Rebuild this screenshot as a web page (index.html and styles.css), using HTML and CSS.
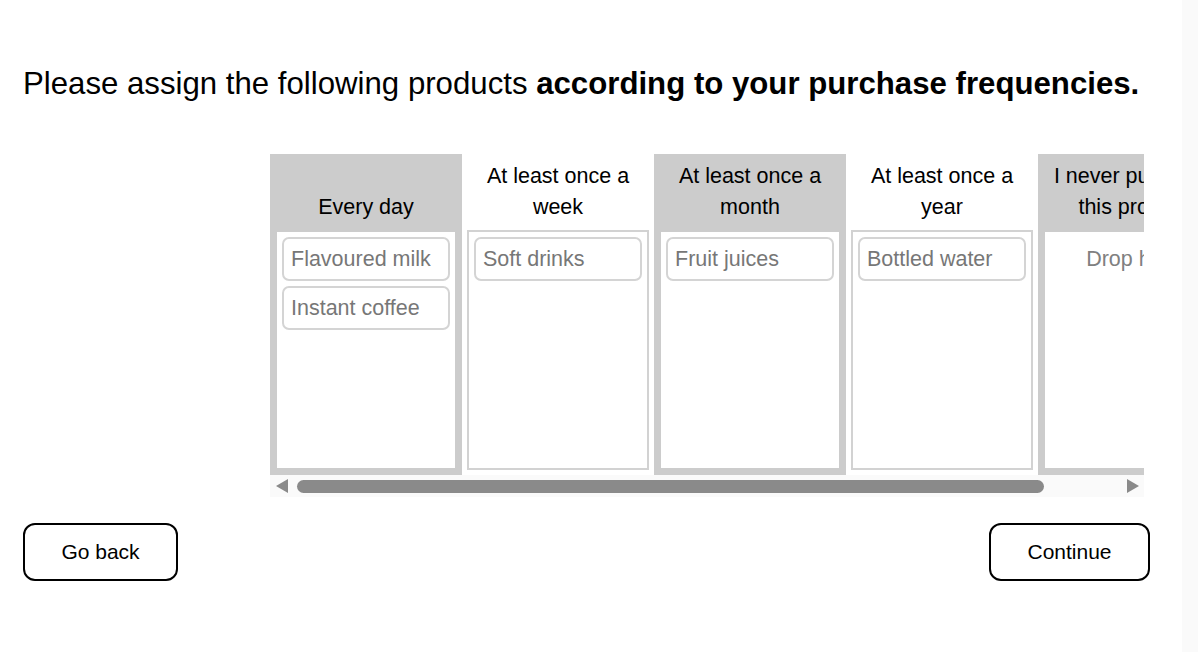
FILE: index.html
```html
<!DOCTYPE html>
<html lang="en">
<head>
    <meta charset="UTF-8">
    <meta name="viewport" content="width=device-width, initial-scale=1.0">
    <title>Purchase frequencies</title>
    <link rel="stylesheet" href="styles.css">
</head>
<body>
    <div class="page">
        <main class="survey">
            <h1 class="question">Please assign the following products <strong>according to your purchase frequencies.</strong></h1>

            <!-- Ranking board -->
            <div class="board">
                <div class="board-scroll">
                    <div class="columns">
                        <div class="column shaded">
                            <div class="column-head">Every day</div>
                            <div class="drop-zone">
                                <div class="item">Flavoured milk</div>
                                <div class="item">Instant coffee</div>
                            </div>
                        </div>
                        <div class="column">
                            <div class="column-head">At least once a week</div>
                            <div class="drop-zone">
                                <div class="item">Soft drinks</div>
                            </div>
                        </div>
                        <div class="column shaded">
                            <div class="column-head">At least once a month</div>
                            <div class="drop-zone">
                                <div class="item">Fruit juices</div>
                            </div>
                        </div>
                        <div class="column">
                            <div class="column-head">At least once a year</div>
                            <div class="drop-zone">
                                <div class="item">Bottled water</div>
                            </div>
                        </div>
                        <div class="column shaded">
                            <div class="column-head">I never purchase this product</div>
                            <div class="drop-zone">
                                <div class="placeholder">Drop here</div>
                            </div>
                        </div>
                    </div>
                </div>
                <div class="scrollbar">
                    <span class="arrow left"></span>
                    <div class="track"><div class="thumb"></div></div>
                    <span class="arrow right"></span>
                </div>
            </div>

            <div class="nav-buttons">
                <button class="btn back">Go back</button>
                <button class="btn next">Continue</button>
            </div>
        </main>
        <div class="page-scroll"></div>
    </div>
</body>
</html>
```

FILE: styles.css
```css
* {
    margin: 0;
    padding: 0;
    box-sizing: border-box;
}

body {
    font-family: 'Liberation Sans', Arial, sans-serif;
    background: #fff;
    color: #000;
}

.page {
    display: flex;
    min-height: 652px;
}

.survey {
    width: 1182px;
    padding: 66px 32px 0 23px;
}

.page-scroll {
    flex: 1;
    background: #fafafa;
}

.question {
    font-size: 31.2px;
    font-weight: normal;
    line-height: 36px;
    margin-bottom: 52px;
    white-space: nowrap;
}

.question strong {
    font-weight: bold;
}

/* Board */
.board {
    width: 874px;
    margin-left: 247px;
}

.board-scroll {
    overflow: hidden;
}

.columns {
    display: flex;
    width: max-content;
}

.column {
    width: 192px;
    background: #fff;
    padding-bottom: 5px;
}

.column.shaded {
    background: #cccccc;
}

.column-head {
    height: 76px;
    padding: 6px 2px 7px;
    display: flex;
    align-items: flex-end;
    justify-content: center;
    text-align: center;
    font-size: 21.5px;
    line-height: 31px;
}

.drop-zone {
    margin: 0 5px;
    height: 240px;
    border: 2px solid #d2d2d2;
    background: #fff;
    padding: 5px 5px;
    display: flex;
    flex-direction: column;
    gap: 5px;
}

.shaded .drop-zone {
    border-color: #cccccc;
}

.item {
    height: 44px;
    border: 2px solid #d4d4d4;
    border-radius: 7px;
    padding: 0 7px;
    font-size: 21.5px;
    line-height: 40px;
    color: #777;
    white-space: nowrap;
}

.placeholder {
    text-align: center;
    font-size: 21.5px;
    line-height: 44px;
    color: #808080;
    white-space: nowrap;
}

/* Fake horizontal scrollbar */
.scrollbar {
    height: 22px;
    background: #fafafa;
    display: flex;
    align-items: center;
    padding: 0 5px 0 6px;
    gap: 9px;
}

.track {
    flex: 1;
}

.thumb {
    width: 747px;
    height: 13px;
    border-radius: 7px;
    background: #8a8a8a;
}

.arrow {
    width: 0;
    height: 0;
    border-top: 7px solid transparent;
    border-bottom: 7px solid transparent;
}

.arrow.left {
    border-right: 12px solid #8a8a8a;
}

.arrow.right {
    border-left: 12px solid #8a8a8a;
}

/* Buttons */
.nav-buttons {
    display: flex;
    justify-content: space-between;
    margin-top: 26px;
}

.btn {
    height: 58px;
    border: 2px solid #000;
    border-radius: 12px;
    background: #fff;
    font-family: inherit;
    font-size: 21px;
    color: #000;
    cursor: pointer;
}

.btn.back {
    width: 155px;
}

.btn.next {
    width: 161px;
}
```
